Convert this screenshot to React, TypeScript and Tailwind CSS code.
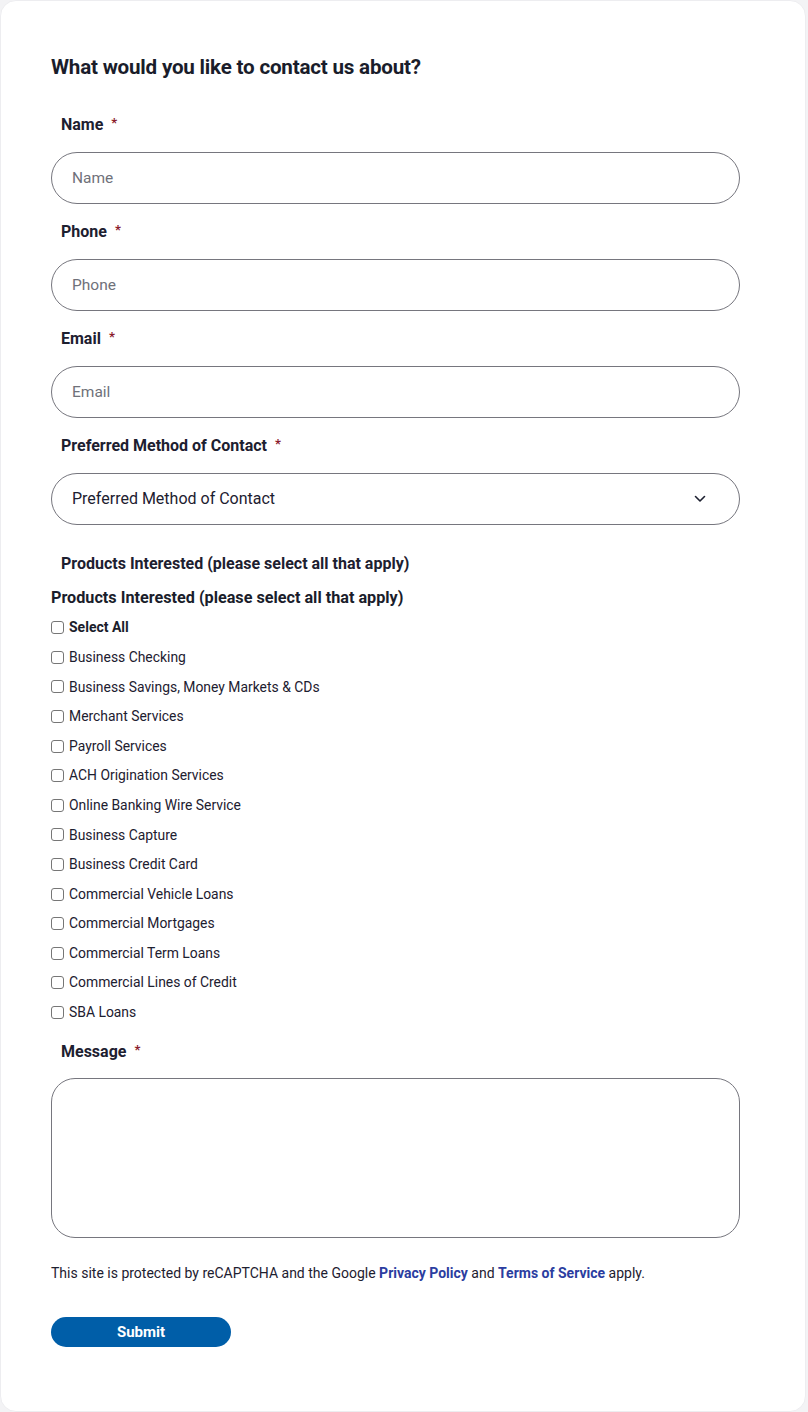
import React from "react";

const products = [
  "Business Checking",
  "Business Savings, Money Markets & CDs",
  "Merchant Services",
  "Payroll Services",
  "ACH Origination Services",
  "Online Banking Wire Service",
  "Business Capture",
  "Business Credit Card",
  "Commercial Vehicle Loans",
  "Commercial Mortgages",
  "Commercial Term Loans",
  "Commercial Lines of Credit",
  "SBA Loans",
];

function Label({ text, required = true }: { text: string; required?: boolean }) {
  return (
    <div className="h-[20px] leading-[20px] pl-[10px] text-[16px] font-bold text-[#1d2030] flex items-center">
      <span className="relative top-[1px]">{text}</span>
      {required && <span className="ml-[8px] text-[#8a1c2c] text-[13px] relative top-[-1px]">*</span>}
    </div>
  );
}

function Box() {
  return (
    <span className="w-[13px] h-[13px] border border-[#767676] rounded-[3px] bg-white shrink-0 inline-block" />
  );
}

export default function App() {
  return (
    <div className="min-h-screen bg-[#f3f3f5] pr-[2px]" style={{ fontFamily: "Roboto, 'Liberation Sans', sans-serif" }}>
      <div className="w-[806px] bg-white rounded-[16px] border border-[#ededf0] pl-[50px] pr-[65px] pt-[52px] pb-[64px]">
        <h2 className="h-[28px] leading-[28px] text-[20.6px] font-bold text-[#1a1d2b] tracking-[-0.2px]">
          What would you like to contact us about?
        </h2>

        <div className="mt-[33px]">
          <Label text="Name" />
          <div className="mt-[18px] h-[52px] rounded-full border border-[#76767e] flex items-center pl-[20px] pt-[2px] text-[15.5px] text-[#6f717a]">
            Name
          </div>
        </div>
        <div className="mt-[17px]">
          <Label text="Phone" />
          <div className="mt-[18px] h-[52px] rounded-full border border-[#76767e] flex items-center pl-[20px] pt-[2px] text-[15.5px] text-[#6f717a]">
            Phone
          </div>
        </div>
        <div className="mt-[17px]">
          <Label text="Email" />
          <div className="mt-[18px] h-[52px] rounded-full border border-[#76767e] flex items-center pl-[20px] pt-[2px] text-[15.5px] text-[#6f717a]">
            Email
          </div>
        </div>
        <div className="mt-[17px]">
          <Label text="Preferred Method of Contact" />
          <div className="mt-[18px] h-[52px] rounded-full border border-[#76767e] flex items-center justify-between pl-[20px] pr-[33px] text-[16px] text-[#1d2030]">
            <span>Preferred Method of Contact</span>
            <svg width="12" height="8" viewBox="0 0 12 8" fill="none">
              <path d="M1.5 1.5 L6 6 L10.5 1.5" stroke="#1d2030" strokeWidth="1.6" strokeLinecap="round" strokeLinejoin="round" />
            </svg>
          </div>
        </div>

        <div className="mt-[28px]">
          <Label text="Products Interested (please select all that apply)" required={false} />
        </div>
        <div className="mt-[15px] h-[20px] leading-[20px] text-[16.2px] font-bold text-[#1a1d2b]">
          Products Interested (please select all that apply)
        </div>
        <div className="mt-[5px] flex flex-col">
          <label className="h-[29.6px] flex items-center gap-[5px] text-[14px] font-bold text-[#1a1d2b]">
            <Box />
            <span>Select All</span>
          </label>
          {products.map((p) => (
            <label key={p} className="h-[29.6px] flex items-center gap-[5px] text-[13.9px] text-[#1d2030]">
              <Box />
              <span>{p}</span>
            </label>
          ))}
        </div>

        <div className="mt-[14px]">
          <Label text="Message" />
          <div className="mt-[17px] h-[160px] rounded-[24px] border border-[#76767e]" />
        </div>

        <p className="mt-[25px] h-[20px] leading-[20px] text-[14px] text-[#1d2030]">
          This site is protected by reCAPTCHA and the Google{" "}
          <a className="font-bold text-[#2b3da0]">Privacy Policy</a> and{" "}
          <a className="font-bold text-[#2b3da0]">Terms of Service</a> apply.
        </p>

        <button className="mt-[34px] w-[180px] h-[30px] rounded-full bg-[#005ea8] text-white text-[15px] font-bold flex items-center justify-center">
          Submit
        </button>
      </div>
    </div>
  );
}
